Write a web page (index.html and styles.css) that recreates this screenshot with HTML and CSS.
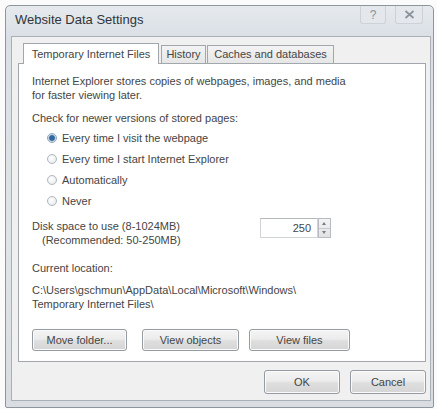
FILE: index.html
```html
<!DOCTYPE html>
<html>
<head>
<meta charset="utf-8">
<link rel="stylesheet" href="styles.css">
</head>
<body>
<div class="window">
  <div class="titlebar">
    <span class="title">Website Data Settings</span>
    <div class="caption-btns">
      <span class="cap-btn help">?</span>
      <span class="cap-btn close">
        <svg width="11" height="9" viewBox="0 0 11 9"><path d="M1.5 1 L9.5 8 M9.5 1 L1.5 8" stroke="#8a929c" stroke-width="1.7" fill="none"/></svg>
      </span>
    </div>
  </div>
  <div class="client">
    <div class="tabs">
      <span class="tab active">Temporary Internet Files</span>
      <span class="tab history">History</span>
      <span class="tab caches">Caches and databases</span>
    </div>
    <div class="panel">
      <p class="intro">Internet Explorer stores copies of webpages, images, and media<br>for faster viewing later.</p>
      <p class="label">Check for newer versions of stored pages:</p>
      <div class="radios">
        <label class="radio"><span class="dot checked"></span>Every time I visit the webpage</label>
        <label class="radio"><span class="dot"></span>Every time I start Internet Explorer</label>
        <label class="radio"><span class="dot"></span>Automatically</label>
        <label class="radio"><span class="dot"></span>Never</label>
      </div>
      <div class="disk">
        <div class="disk-text">
          <div>Disk space to use (8-1024MB)</div>
          <div class="indent">(Recommended: 50-250MB)</div>
        </div>
        <div class="spin">
          <span class="spin-value">250</span>
          <span class="spin-arrows">
            <span class="arr up"></span>
            <span class="arr down"></span>
          </span>
        </div>
      </div>
      <p class="label loc-label">Current location:</p>
      <p class="path">C:\Users\gschmun\AppData\Local\Microsoft\Windows\<br>Temporary Internet Files\</p>
      <div class="actions">
        <button class="btn move">Move folder...</button>
        <button class="btn objects">View objects</button>
        <button class="btn files">View files</button>
      </div>
    </div>
    <div class="footer">
      <button class="btn dlg">OK</button>
      <button class="btn dlg">Cancel</button>
    </div>
  </div>
</div>
</body>
</html>
```

FILE: styles.css
```css
* {
  box-sizing: border-box;
}

html, body {
  margin: 0;
  padding: 0;
  background: #fbfbfb;
}

body {
  font-family: "Liberation Sans", Arial, sans-serif;
  font-size: 11px;
  color: #454545;
}

.window {
  margin: 5px 0 0 5px;
  width: 429px;
  height: 403px;
  border: 1px solid #8d959d;
  border-radius: 5px 5px 2px 2px;
  background: linear-gradient(180deg, #e6eaee 0%, #d9dfe5 8%, #dfe4e8 60%, #d9dde2 100%);
  display: flex;
  flex-direction: column;
}

.titlebar {
  height: 30px;
  display: flex;
  align-items: flex-start;
  justify-content: space-between;
  padding: 0 10px 0 9px;
}

.title {
  margin-top: 6px;
  font-size: 13px;
  color: #30353a;
}

.caption-btns {
  display: flex;
  gap: 9px;
}

.cap-btn {
  width: 26px;
  height: 18px;
  display: flex;
  align-items: center;
  justify-content: center;
  font-size: 12px;
  color: #8a929c;
  border: 1px solid #ccd2d8;
  border-top: none;
  border-radius: 0 0 3px 3px;
  background: #e4e8ec;
}

.cap-btn.close {
  width: 28px;
}

.client {
  margin-left: 5px;
  width: 420px;
  height: 365px;
  background: #f0f0f0;
  border: 1px solid #a9b0b7;
  padding: 6px 4px 0 6px;
  display: flex;
  flex-direction: column;
}

.tabs {
  display: flex;
  align-items: flex-end;
  height: 20px;
  padding-left: 5px;
  position: relative;
  z-index: 1;
}

.tab {
  height: 18px;
  line-height: 17px;
  text-align: center;
  border: 1px solid #a2a7ad;
  border-bottom: none;
  background: linear-gradient(#f3f3f3, #e6e6e6);
  color: #454545;
}

.tab.active {
  width: 136px;
  height: 21px;
  line-height: 20px;
  background: #ffffff;
  margin-bottom: -1px;
  margin-right: 2px;
}

.tab.history {
  width: 45px;
  margin-right: 1px;
}

.tab.caches {
  width: 127px;
}

.panel {
  width: 408px;
  height: 299px;
  background: #ffffff;
  border: 1px solid #a2a7ad;
  padding: 10px 12px 0 13px;
}

p {
  margin: 0;
}

.intro {
  line-height: 14px;
}

.label {
  margin-top: 9px;
  line-height: 14px;
}

.radios {
  margin-top: 6px;
  padding-left: 15px;
  display: flex;
  flex-direction: column;
  gap: 7px;
}

.radio {
  display: flex;
  align-items: center;
  height: 14px;
  gap: 5px;
}

.dot {
  width: 10px;
  height: 10px;
  border-radius: 50%;
  border: 1px solid #b0b6bd;
  background: radial-gradient(circle at 40% 40%, #ffffff, #e2e6ea);
  display: inline-block;
}

.dot.checked {
  background: radial-gradient(circle, #35679f 0 2.4px, #9fbcd9 3.2px, #eef3f8 4px);
  border-color: #90a5bb;
}

.disk {
  margin-top: 11px;
  display: flex;
  align-items: flex-start;
}

.disk-text {
  line-height: 14px;
  width: 228px;
}

.indent {
  padding-left: 10px;
}

.spin {
  display: flex;
  margin-top: -1px;
}

.spin-value {
  width: 58px;
  height: 20px;
  line-height: 19px;
  text-align: right;
  padding-right: 6px;
  border: 1px solid #d0d4d8;
  border-top-color: #b4b7bc;
  background: #ffffff;
}

.spin-arrows {
  width: 13px;
  height: 20px;
  border: 1px solid #b8bcc2;
  display: flex;
  flex-direction: column;
  background: linear-gradient(#f4f4f4, #e2e2e2);
}

.arr {
  flex: 1;
  position: relative;
}

.arr.up {
  border-bottom: 1px solid #c6c9cd;
}

.arr::after {
  content: "";
  position: absolute;
  left: 3px;
  top: 3px;
  border-left: 2.5px solid transparent;
  border-right: 2.5px solid transparent;
}

.arr.up::after {
  border-bottom: 3px solid #777c82;
}

.arr.down::after {
  top: 2px;
  border-top: 3px solid #777c82;
}

.loc-label {
  margin-top: 14px;
}

.path {
  margin-top: 8px;
  line-height: 14px;
}

.actions {
  margin-top: 18px;
  display: flex;
}

.btn {
  font-family: inherit;
  font-size: 11px;
  color: #454545;
  height: 22px;
  padding: 0;
  border: 1px solid #959ba2;
  border-radius: 3px;
  background: linear-gradient(#f4f4f4 0%, #ececec 45%, #dedede 55%, #d5d5d5 100%);
  box-shadow: inset 0 0 0 1px #fbfbfb;
}

.btn.move { width: 95px; }
.btn.objects { width: 97px; margin-left: 15px; }
.btn.files { width: 101px; margin-left: 10px; }

.footer {
  display: flex;
  justify-content: flex-end;
  gap: 10px;
  margin-top: 8px;
}

.btn.dlg {
  width: 76px;
  height: 24px;
}
```
